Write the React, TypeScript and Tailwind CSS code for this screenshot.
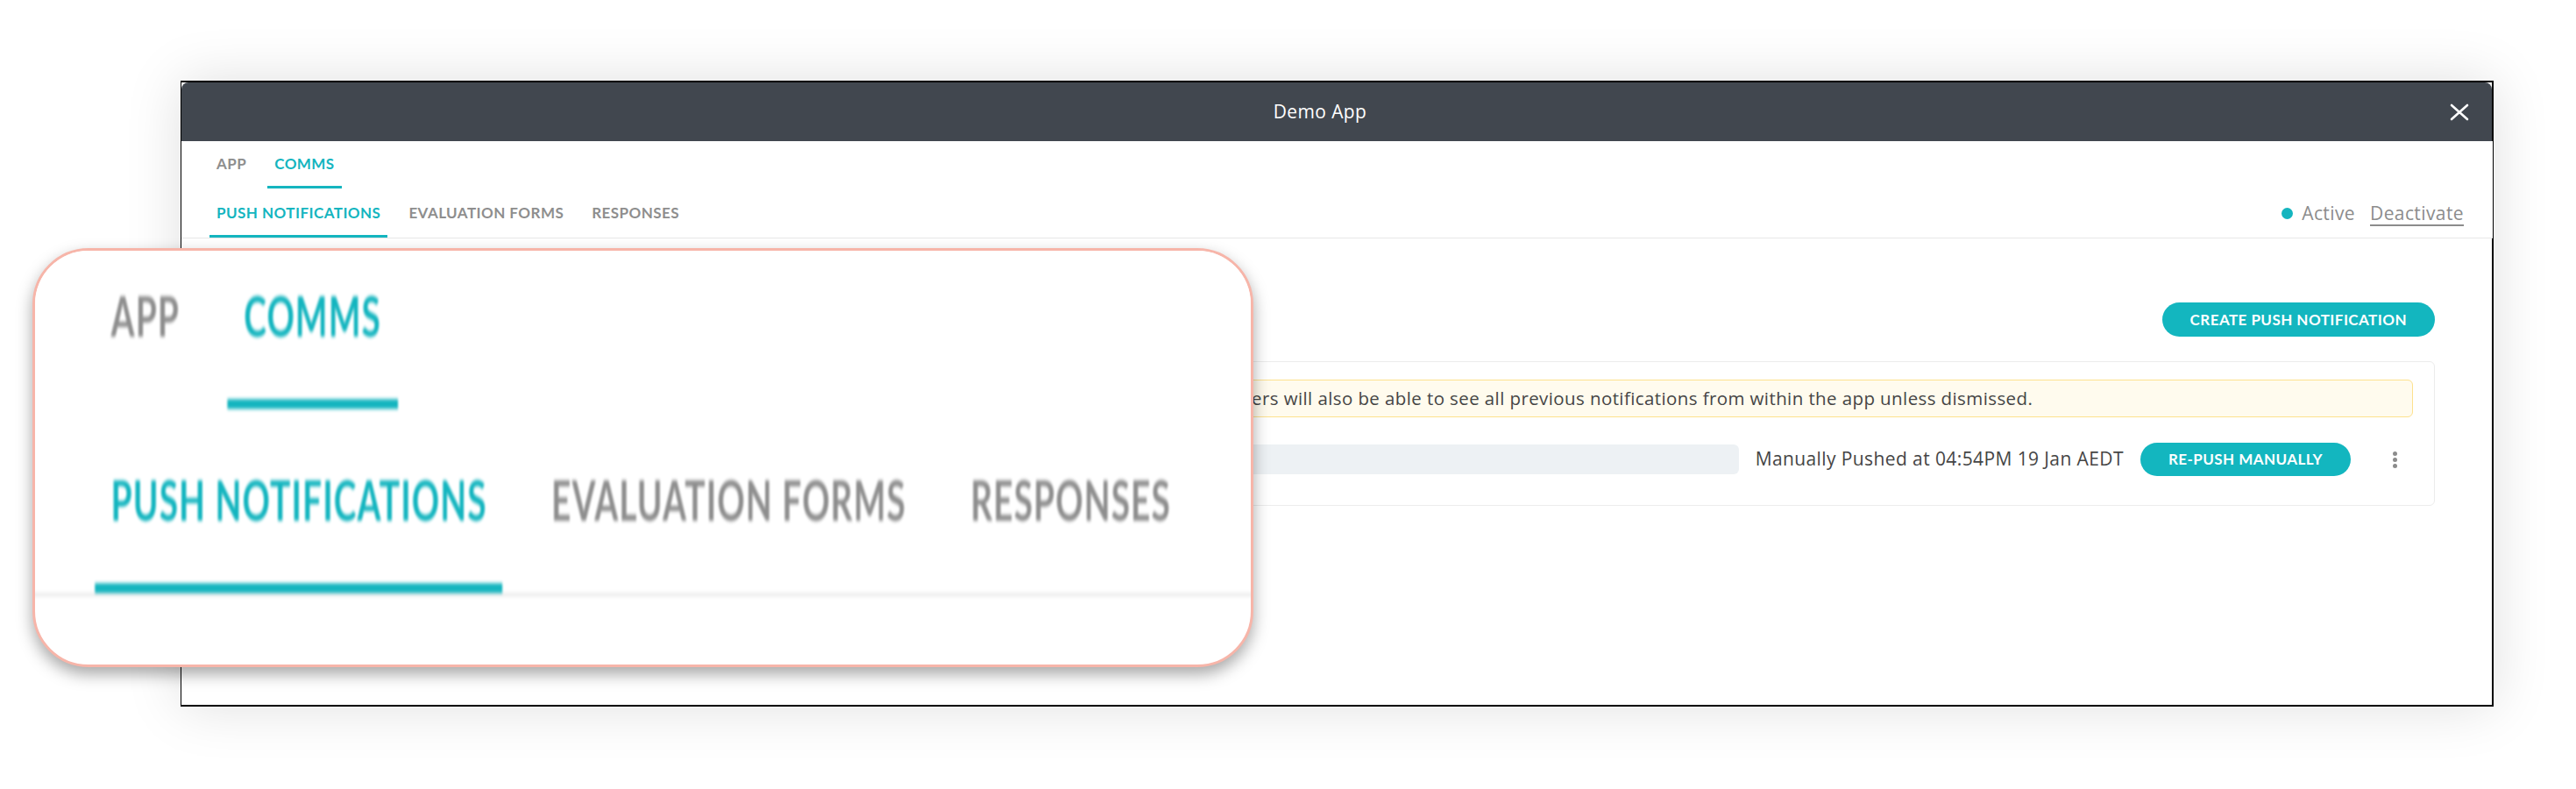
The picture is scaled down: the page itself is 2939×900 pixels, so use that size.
import React from "react";

const tabText = "font-['Lato',sans-serif] text-[17px] font-bold leading-5 tracking-[0.45px]";
const bodyText = "font-['Open_Sans',sans-serif] text-[21px] tracking-[0.4px]";

function Tab({ label, active }: { label: string; active?: boolean }) {
  return (
    <div
      className={`border-b-[3px] px-2 pb-[15px] ${tabText} ${
        active ? "border-[#14b5bf] text-[#14b5bf]" : "border-transparent text-[#8e8e8e]"
      }`}
    >
      {label}
    </div>
  );
}

// the two tab rows with the divider, also reused (scaled up) inside the zoom callout
function TabsBlock({ status = true }: { status?: boolean }) {
  return (
    <div className="w-[2637px] border-b border-[#e8e8e8] bg-white">
      <div className="flex gap-4 pl-8 pt-4">
        <Tab label="APP" />
        <Tab label="COMMS" active />
      </div>
      <div className="flex items-end justify-between pl-8 pr-[33px] pt-[18px]">
        <div className="flex gap-4">
          <Tab label="PUSH NOTIFICATIONS" active />
          <Tab label="EVALUATION FORMS" />
          <Tab label="RESPONSES" />
        </div>
        {status && (
          <div className={`flex items-center pb-[18px] leading-5 text-[#8c8c8c] ${bodyText}`}>
            <span className="mr-[10px] h-[13px] w-[13px] rounded-full bg-[#14b5bf]" />
            <span>Active</span>
            <span className="ml-[17px] underline underline-offset-[5px]">Deactivate</span>
          </div>
        )}
      </div>
    </div>
  );
}

export default function App() {
  return (
    <div className="relative h-[900px] w-[2939px] overflow-hidden bg-white">
      <div className="ml-[206px] mt-[92px] h-[714px] w-[2639px] border border-t-2 border-r-2 border-b-2 border-black bg-white shadow-[0_0_60px_rgba(0,0,0,0.13)]">
        <header className="flex h-[67px] items-center rounded-t-[8px] bg-[#41474f] text-white">
          <div className="flex-1 pl-[11px] text-center font-['Open_Sans',sans-serif] text-[21px] tracking-[0.4px]">
            Demo App
          </div>
          <svg width="24" height="20" viewBox="0 0 24 20" className="mr-[25px]">
            <path d="M3 2 L21 18 M21 2 L3 18" stroke="white" strokeWidth="2.6" strokeLinecap="round" />
          </svg>
        </header>

        <TabsBlock />

        <div className="px-[65px] pt-[73px]">
          <div className="flex justify-end">
            <button className={`h-[39px] rounded-full bg-[#13b6bf] px-8 text-white ${tabText}`}>
              CREATE PUSH NOTIFICATION
            </button>
          </div>

          <div className="mt-[28px] rounded-[6px] border border-[#ececec] px-6 pb-[33px] pt-5">
            <div className="flex h-[43px] items-center overflow-hidden whitespace-nowrap rounded-[6px] border border-[#fde18e] bg-[#fffbee] pl-[27px] pr-4 font-['Open_Sans',sans-serif] text-[20.5px] tracking-[0.4px] text-[#454545]">
              Push notifications are sent to all users who have installed this app and enabled notifications on their device. Users will also be able to see all previous notifications from within the app unless dismissed.
            </div>

            <div className="mt-[29px] flex items-center gap-[19px]">
              <div className="h-[34px] flex-1 rounded-[6px] bg-[#edf1f4]" />
              <span className={`whitespace-nowrap text-[#454545] ${bodyText}`}>
                Manually Pushed at 04:54PM 19 Jan AEDT
              </span>
              <button className={`h-[38px] rounded-full bg-[#13b6bf] px-8 text-white ${tabText}`}>
                RE-PUSH MANUALLY
              </button>
              <div className="ml-[29px] mr-[18px] flex flex-col gap-[2px]">
                <span className="h-[5px] w-[5px] rounded-full bg-[#8c8c8c]" />
                <span className="h-[5px] w-[5px] rounded-full bg-[#8c8c8c]" />
                <span className="h-[5px] w-[5px] rounded-full bg-[#8c8c8c]" />
              </div>
            </div>
          </div>
        </div>
      </div>

      {/* magnified callout over the tabs */}
      <div className="absolute left-[37px] top-[283px] h-[478px] w-[1393px] overflow-hidden rounded-[64px] border-[3px] border-[#f7b5a9] bg-white shadow-[0_8px_18px_rgba(0,0,0,0.35)]">
        <div className="absolute left-[-5px] top-[-22px] w-[610px] origin-top-left scale-x-[2.29] scale-y-[3.75] overflow-hidden blur-[0.5px]">
          <TabsBlock status={false} />
        </div>
      </div>
    </div>
  );
}
